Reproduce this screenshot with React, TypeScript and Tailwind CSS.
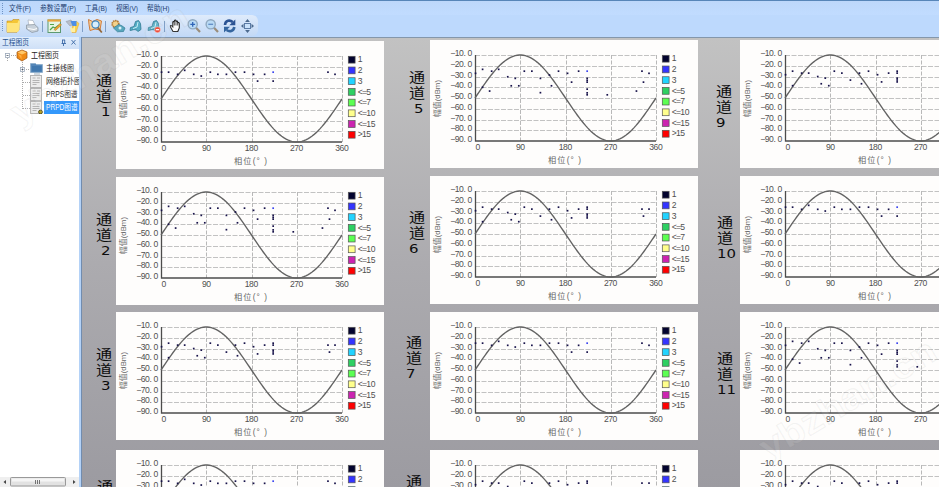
import { useMemo } from "react";

type Point = [phase: number, dbm: number, color?: string];

const BLUE = "#3c46f0";

const SPARSE: Point[] = [
  [1, -25], [15, -25], [33, -27], [47, -23.3], [65, -27], [80, -28.6],
  [98, -25], [113, -27], [130, -27], [148, -25], [166, -25], [184, -27],
  [192, -33.3], [206, -27], [223, -33.3], [223, -25, BLUE], [332, -25], [346, -27]
];

const DENSE: Point[] = [
  [1, -27], [15, -23.3], [15, -40], [29, -43.5], [33, -25], [47, -23.3],
  [65, -30.2], [72, -38.6], [80, -31.7], [87, -38.6], [98, -25], [113, -25],
  [130, -31.7], [130, -45], [148, -28.6], [152, -38.6], [166, -25], [184, -27],
  [192, -35.2], [206, -25], [223, -25, BLUE], [223, -31.7], [223, -33.5],
  [223, -35.2], [223, -41.7], [223, -45.2], [223, -47], [263, -47],
  [321, -43.5], [332, -25], [335, -35.2], [346, -27]
];

const MEDIUM: Point[] = [
  [1, -28.3], [15, -25], [15, -38.5], [33, -26.8], [47, -26.8], [65, -30],
  [72, -36.7], [80, -31.5], [87, -38.5], [98, -25], [113, -26.8], [130, -33.3],
  [148, -26.8], [152, -36.7], [166, -25], [184, -28.3], [192, -35], [206, -26.8],
  [223, -25], [223, -26.8], [223, -31.5], [223, -33.2], [223, -35],
  [332, -26.8], [335, -33.3], [346, -26.8]
];

// label = left edge and top of the channel name, num = x shift of the number
const COLUMNS = [
  {
    id: "left",
    width: 314,
    cardX: 34,
    channels: [
      { no: 1, top: 3, label: [14, 31], num: 5, points: SPARSE },
      { no: 2, top: 8, label: [14, 34], num: 5, points: DENSE },
      { no: 3, top: 7, label: [14, 34], num: 5, points: MEDIUM },
      { no: 4, top: 10, label: [15, 28], num: 5, points: SPARSE }
    ]
  },
  {
    id: "middle",
    width: 310,
    cardX: 34,
    channels: [
      { no: 5, top: 2, label: [13, 29], num: 5, points: DENSE },
      { no: 6, top: 8, label: [13, 33], num: 0, points: MEDIUM },
      { no: 7, top: 8, label: [10, 22], num: 0, points: SPARSE },
      { no: 8, top: 10, label: [10, 23], num: 0, points: MEDIUM }
    ]
  },
  {
    id: "right",
    width: 310,
    cardX: 34,
    channels: [
      { no: 9, top: 2, label: [10, 43], num: 0, points: MEDIUM },
      { no: 10, top: 8, label: [11, 38], num: 0, points: SPARSE },
      { no: 11, top: 8, label: [11, 38], num: 0, points: DENSE },
      { no: 12, top: 10, label: [11, 50], num: 0, points: MEDIUM }
    ]
  }
];

const LEGEND = [
  { label: "1", color: "#03032e" },
  { label: "2", color: "#3434ff" },
  { label: "3", color: "#22d3ff" },
  { label: "<=5", color: "#2ed062" },
  { label: "<=7", color: "#5cff52" },
  { label: "<=10", color: "#ffff8c" },
  { label: "<=15", color: "#cc24b0" },
  { label: ">15", color: "#ff0000" }
];

const MENUS = [
  { text: "文件(F)", width: 22 },
  { text: "参数设置(P)", width: 36 },
  { text: "工具(B)", width: 22 },
  { text: "视图(V)", width: 22 },
  { text: "帮助(H)", width: 22.5 }
];

const X0 = 45;
const Y0 = 15;
const W = 181;
const H = 86;
const CELL = 4.3;

const px = (phase: number) => X0 + (phase / 360) * W;
const py = (dbm: number) => Y0 + ((-10 - dbm) / 80) * H;

// every character sits in a cell of the same width
function CellText({ text, x, y }: { text: string; x: number; y: number }) {
  const xs = text.split("").map((c, i) => x + (i + (c === "." ? 0.3 : 0.5)) * CELL);
  return (
    <text x={xs.join(" ")} y={y} textAnchor="middle">
      {text}
    </text>
  );
}

function PrpdChart({ points }: { points: Point[] }) {
  const curve = useMemo(() => {
    const parts: string[] = [];
    for (let a = 0; a <= 360; a += 4) {
      parts.push(`${px(a).toFixed(2)},${py(-50 + 40 * Math.sin((a * Math.PI) / 180)).toFixed(2)}`);
    }
    return parts.join(" ");
  }, []);

  return (
    <svg
      width="268"
      height="128"
      viewBox="0 0 268 128"
      className="block shrink-0 bg-[#fefdfc] font-['Liberation_Sans','Noto_Sans_CJK_SC',sans-serif]"
    >
      {[-10, -20, -30, -40, -50, -60, -70, -80].map((v) => (
        <line key={v} x1={X0} x2={X0 + W} y1={Math.round(py(v)) + 0.5} y2={Math.round(py(v)) + 0.5} stroke="#c2c2c2" strokeDasharray="5 1.5" />
      ))}
      {[90, 180, 270, 360].map((v) => (
        <line key={v} x1={Math.round(px(v)) + 0.5} x2={Math.round(px(v)) + 0.5} y1={Y0} y2={Y0 + H} stroke="#b8b8b8" strokeDasharray="4 1.5" />
      ))}
      <path d={`M${X0 + 0.5} ${Y0}V${Y0 + H}H${X0 + W}`} fill="none" stroke="#4c4c4c" strokeWidth="1.3" />
      <polyline points={curve} fill="none" stroke="#636363" strokeWidth="1.35" />
      {points.map(([phase, dbm, color], i) => (
        <rect key={i} x={px(phase) - 0.8} y={py(dbm) - 0.8} width="1.7" height="1.7" fill={color ?? "#17124a"} />
      ))}
      <g fontSize="8.6" fill="#505050">
        {[10, 20, 30, 40, 50, 60, 70, 80, 90].map((v, i) => (
          <CellText key={v} text={`−${v}.0`} x={20.6} y={16.2 + i * 10.72} />
        ))}
        {[0, 90, 180, 270, 360].map((v, i) => (
          <CellText key={v} text={String(v)} x={[48, 90.5, 135.5, 180.7, 226][i] - (String(v).length * CELL) / 2} y={110.2} />
        ))}
        <g fill="#666">
          <text x="118" y="122.5" fontSize="8.2" textLength="33" lengthAdjust="spacing">
            相位(° )
          </text>
          <text x="-77" y="10" fontSize="7.8" transform="rotate(-90)" textLength="37" lengthAdjust="spacing">
            幅值(dBm)
          </text>
        </g>
        {LEGEND.map((item, i) => (
          <g key={item.label}>
            <rect x="232.3" y={15.3 + i * 10.72} width="6.8" height="6.8" fill={item.color} stroke="#555" strokeWidth="0.7" />
            <CellText text={item.label} x={242} y={21.4 + i * 10.72} />
          </g>
        ))}
      </g>
    </svg>
  );
}

function ChannelLabel({ no, pos, num }: { no: number; pos: number[]; num: number }) {
  return (
    <svg width="20" height="47" className="block overflow-visible" style={{ marginLeft: pos[0], marginTop: pos[1] }} fill="#0c0c0c">
      <text fontSize="14" fontWeight="400" transform="scale(1.15 1)" className="font-['Noto_Sans_CJK_SC',sans-serif]">
        <tspan x="0" y="13.4">通</tspan>
        <tspan x="0" y="29">道</tspan>
      </text>
      <text
        x={num}
        y="43.7"
        fontSize="12.5"
        textLength={String(no).length * 9.5}
        lengthAdjust="spacingAndGlyphs"
        className="font-['DejaVu_Sans',sans-serif]"
      >
        {no}
      </text>
    </svg>
  );
}

function Grip() {
  return <div className="h-[11px] w-px shrink-0 border-l border-dotted border-[#6f93c4]" />;
}

function Toolbar() {
  return (
    <div className="flex h-[21px] w-[258px] shrink-0 items-center rounded-r-md bg-linear-to-b from-[#dfebfb] to-[#c3d9f6] pl-0.5">
      <Grip />
      <svg width="253" height="21" viewBox="3 -1 253 21" className="shrink-0" fill="none">
        {/* open */}
        <path d="M7 5h5l1-1.5h6V14l-2 2.2H7z" fill="#f4c535" stroke="#c28f20" strokeWidth=".6" />
        <path d="M7 7h10.500l1-3 1.500 1-1 9.500-1.500 1.500H7z" fill="#ffe47a" />
        {/* print */}
        <path d="M28 4l5 .5 2 4.500-6 1z" fill="#fff" stroke="#9aa4b2" strokeWidth=".6" />
        <path d="M26.500 9l8-.5 3.500 3v3.500l-6 1.500-5.500-3.500z" fill="#c8d1da" stroke="#87929e" strokeWidth=".7" />
        <path d="M28 12.500l6 1 3-1" stroke="#fff" />
        <path d="M42.500 5v11" stroke="#7f9fc8" />
        {/* edit diagram */}
        <rect x="48" y="4" width="12.500" height="12.500" fill="#e7f4e3" stroke="#5c9a72" />
        <path d="M47.500 4.500h13.500" stroke="#e8a33c" strokeWidth="2.200" />
        <path d="M50 14l3-3 2 1 4-3M50 8.500h4" stroke="#51a34a" strokeWidth="1.200" />
        <path d="M54 13.500l6-6 1.500 1.500-6 5.500z" fill="#f3a730" stroke="#a36a20" strokeWidth=".5" />
        {/* wizard */}
        <path d="M66 5.500l5-1.500 3 4-4 2z" fill="#b7bec9" stroke="#8b92a0" strokeWidth=".5" />
        <path d="M72.500 9l3.500-4 3 2.500-3 9h-4z" fill="#fbd34e" stroke="#e6a42c" strokeWidth=".5" />
        <path d="M70.500 5h6v5h-4z" fill="#4d8ee6" />
        <path d="M70 11l3 1.500 2-3v6.500h-4z" fill="#fff0a2" />
        <path d="M82.500 5v11" stroke="#7f9fc8" />
        {/* map search */}
        <path d="M88.500 3.500l4 2 4.500-2 4.500 1.500-1.500 9-5-1-5 1.500-1-6z" fill="#f8cf96" stroke="#cf7c3c" />
        <circle cx="95.500" cy="8.500" r="3.600" fill="#d9effc" stroke="#3c86c3" strokeWidth="1.200" />
        <path d="M97.800 11.500l4 5" stroke="#94683a" strokeWidth="1.800" />
        <path d="M105.500 5v11" stroke="#7f9fc8" />
        {/* gears */}
        <circle cx="115.500" cy="8" r="3.300" fill="#f3d28b" stroke="#b37a32" strokeWidth="1.700" strokeDasharray="1.500 .6" />
        <path d="M113.500 12l5-3.500 3 1 3.500 2.500-1.500 3.500-6 .3z" fill="#58a7bd" stroke="#2f7b94" strokeWidth=".7" />
        <circle cx="120" cy="12" r="1.500" fill="#d8f2f7" />
        {/* connect */}
        <path d="M130 14.500l.5-3 3.500-1 1.500-5 3-1 2 3 .5 6-3 2c-2-2-3-2.500-7.500-1z" fill="#55adc5" stroke="#2e7791" strokeWidth=".8" />
        <path d="M133 12.500l4-1.500 1-5" stroke="#c6eef5" />
        {/* disconnect */}
        <path d="M148 14.500l.5-3 3.500-1 1.500-5 3-1 2 3 .5 6-3 2c-2-2-3-2.500-7.500-1z" fill="#55adc5" stroke="#2e7791" strokeWidth=".8" />
        <path d="M151 12.500l4-1.500 1-5" stroke="#c6eef5" />
        <circle cx="157.500" cy="13.700" r="3" fill="#ef4b38" stroke="#fff" strokeWidth=".4" />
        <path d="M155.800 13.700h3.400" stroke="#fff" strokeWidth="1.200" />
        <path d="M164.500 5v11" stroke="#7f9fc8" />
        {/* pan hand */}
        <path d="M173 15.500l-2.500-4.500c-.5-1.500.5-2 1.300-1l1 1V6.500c0-1.200 1.400-1.200 1.500 0V5c0-1.300 1.600-1.300 1.700 0v1c0-1.200 1.600-1.100 1.700 0v1.200c.2-1 1.600-.9 1.600.2V12l-1.500 3.500z" fill="#fff" stroke="#222" strokeWidth="1.100" />
        <path d="M174.300 6.500v3M176 6v3.500M177.700 7v2.500" stroke="#222" strokeWidth=".8" />
        {/* zoom in / out */}
        <path d="M195.800 11.500l4.200 4.500" stroke="#9a8d7b" strokeWidth="2.200" />
        <circle cx="192.700" cy="8.300" r="4.600" fill="#b9daf5" stroke="#8fa9c0" strokeWidth="1.400" />
        <path d="M190.300 8.300h4.800M192.700 5.900v4.800" stroke="#2f65b8" strokeWidth="1.300" />
        <path d="M213.800 11.500l4.200 4.500" stroke="#9a8d7b" strokeWidth="2.200" />
        <circle cx="210.700" cy="8.300" r="4.600" fill="#b9daf5" stroke="#8fa9c0" strokeWidth="1.400" />
        <path d="M208.300 8.300h4.800" stroke="#5f8cc4" strokeWidth="1.300" />
        {/* refresh */}
        <path d="M225 9c.3-5 5-5.300 7.700-3" stroke="#2b5393" strokeWidth="2.600" />
        <path d="M235.300 3.500v5.700h-6z" fill="#2b5393" />
        <path d="M234.300 11c-.5 4.500-5 5-7.700 3" stroke="#34659f" strokeWidth="2.600" />
        <path d="M224 16.500v-5.700h6z" fill="#34659f" />
        {/* fit to window */}
        <rect x="244.500" y="7.500" width="6" height="5" fill="#c9e1fa" stroke="#5b7ba5" />
        <path d="M247.500 3l2.400 3h-4.800zM247.500 17l2.400-3h-4.800zM241 10l2.500-2.200v4.400zM254 10l-2.500-2.200v4.400z" fill="#4c6a8e" />
      </svg>
    </div>
  );
}

function PageIcon({ active }: { active?: boolean }) {
  return (
    <svg width="13" height="13" viewBox="0 0 13 13" className="shrink-0" fill="none">
      <rect x=".5" y=".5" width="11" height="12" fill="#ececec" stroke="#b4b4b4" />
      <path d="M2.500 3h3M7 3h3M2.500 5.500h7M2.500 7.500h7M2.500 9.500h4" stroke="#b4b4b4" />
      {active && <circle cx="10.500" cy="11" r="1.900" fill="#b8a51f" stroke="#3d3813" strokeWidth=".8" />}
    </svg>
  );
}

function TreeText({ text, width, active }: { text: string; width: number; active?: boolean }) {
  return (
    <div className={active ? "h-[13px] bg-[#3498fb] pl-[1.5px]" : "h-[13px] pl-[1.5px]"}>
      <svg width={width} height="13" className="block overflow-visible">
        <text x="0" y="9.4" fontSize="8.3" fill={active ? "#fff" : "#222"} textLength={width} lengthAdjust="spacingAndGlyphs">
          {text}
        </text>
      </svg>
    </div>
  );
}

function Sidebar() {
  return (
    <aside className="flex w-[79px] shrink-0 flex-col overflow-hidden bg-white">
      <div className="flex h-[12px] shrink-0 items-center bg-linear-to-b from-[#e1edfc] to-[#cfe0f7] pl-0.5">
        <svg width="77" height="12" fill="none">
          <text x="0" y="8.2" fontSize="8" fill="#24508f" textLength="27" lengthAdjust="spacingAndGlyphs">工程图页</text>
          <path d="M60 3h3M60.500 3v3.500M62.700 3v3.500M59.500 6.500h4.500M61.500 6.500v2.500M69.500 3l4 4.500M73.500 3l-4 4.500" stroke="#3a68a5" strokeWidth=".9" />
        </svg>
      </div>
      <div className="flex h-[13px] shrink-0 items-center pl-[5px]">
        <svg width="24" height="13" fill="none" className="shrink-0">
          <path d="M6 6.500h5M2.500 9v4" stroke="#aaa" strokeDasharray="1 1" />
          <rect x=".5" y="4.500" width="4" height="4" fill="#fff" stroke="#9ba7b8" strokeWidth=".8" />
          <path d="M1.500 6.500h2" stroke="#345" strokeWidth=".7" />
          <path d="M17 1l5 2v6l-5 3-5-3V3z" fill="#f08b16" stroke="#9b5312" strokeWidth=".7" />
          <path d="M17 1.500l4.500 2-4.500 2-4.500-2z" fill="#ffc768" />
          <path d="M13 5l3.500 1.500v4z" fill="#ffad3e" />
        </svg>
        <TreeText text="工程图页" width={28} />
      </div>
      <div className="flex h-[53px] shrink-0">
        <svg width="30" height="53" fill="none" className="shrink-0">
          <path d="M22.500 0v47M26 7.500h4M23 20.500h7M23 33.500h7M23 46.500h7" stroke="#aaa" strokeDasharray="1 1" />
          <rect x="20.500" y="5.500" width="4" height="4" fill="#fff" stroke="#9ba7b8" strokeWidth=".8" />
          <path d="M21.500 7.500h2M22.500 6.500v2" stroke="#345" strokeWidth=".7" />
        </svg>
        <div className="flex w-[14px] shrink-0 flex-col">
          <svg width="13" height="13" fill="none">
            <path d="M.5 1.500h5l1 1h6v8H.5z" fill="#5486b8" stroke="#87a9c9" strokeWidth=".7" />
            <path d="M2 4h9.500v5.500H2z" fill="#4178ae" />
            <path d="M4 12h6" stroke="#9dafbf" />
          </svg>
          <PageIcon />
          <PageIcon />
          <PageIcon active />
        </div>
        <div className="flex w-[35px] shrink-0 flex-col overflow-hidden">
          <TreeText text="主接线图" width={28} />
          <TreeText text="网络拓扑图" width={35} />
          <TreeText text="PRPS图谱" width={31.5} />
          <TreeText text="PRPD图谱" width={31.5} active />
        </div>
      </div>
      <div className="grow" />
      <div className="flex h-[10px] shrink-0 items-center bg-[#efefef]">
        <svg width="79" height="10" fill="none">
          <path d="M6 3v4L3.500 5zM73 3v4l2.500-2z" fill="#444" />
          <rect x="10.500" y=".5" width="55" height="8.500" rx="1" fill="#e2e2e2" stroke="#999" />
          <path d="M12 1.500h52v3H12z" fill="#f5f5f5" />
          <path d="M35.500 3v4M37.500 3v4M39.500 3v4" stroke="#555" strokeWidth=".8" />
        </svg>
      </div>
    </aside>
  );
}

// faint site mark laid over the window
function Watermark({ className }: { className: string }) {
  return (
    <svg className={`pointer-events-none absolute overflow-visible ${className}`} width="180" height="130">
      <text
        x="0"
        y="124"
        fontSize="36"
        fontWeight="700"
        fill="#ffffff"
        fillOpacity=".1"
        stroke="#888"
        strokeOpacity=".09"
        strokeWidth="1.2"
        transform="rotate(-31 0 124)"
        textLength="200"
        lengthAdjust="spacingAndGlyphs"
      >
        ybzhan.cn
      </text>
    </svg>
  );
}

export default function App() {
  return (
    <div className="relative flex h-[487px] w-[939px] flex-col overflow-hidden bg-[#bdd9fd] font-['Liberation_Sans','Noto_Sans_CJK_SC',sans-serif]">
      <div className="h-px shrink-0 bg-[#5785b8]" />
      <nav className="flex h-[14px] shrink-0 items-center bg-linear-to-b from-[#bdd7fa] to-[#c1dcff] pl-0.5">
        <Grip />
        <div className="flex items-center gap-[9px] pl-1.5">
          {MENUS.map((menu) => (
            <svg key={menu.text} width={menu.width} height="14" className="block overflow-visible">
              <text x="0" y="9.8" fontSize="7.5" fill="#1d3d70" textLength={menu.width} lengthAdjust="spacingAndGlyphs">
                {menu.text}
              </text>
            </svg>
          ))}
        </div>
      </nav>
      <Toolbar />
      <div className="flex min-h-0 grow pt-px">
        <Sidebar />
        <div className="w-[3px] shrink-0 border-r border-[#718caf] bg-[#b4d2f7]" />
        <main className="flex min-w-0 grow flex-col overflow-hidden border-t border-[#8497ab] bg-linear-to-b from-[#c2c2c2] via-[#acabaf] to-[#9c9ba1]">
          <div className="flex">
            {COLUMNS.map((col) => (
              <div key={col.id} className="shrink-0" style={{ width: col.width }}>
                {col.channels.map((ch) => (
                  <div key={ch.no} className="flex h-[128px]" style={{ marginTop: ch.top }}>
                    <div className="shrink-0" style={{ width: col.cardX }}>
                      <ChannelLabel no={ch.no} pos={ch.label} num={ch.num} />
                    </div>
                    <PrpdChart points={ch.points} />
                  </div>
                ))}
              </div>
            ))}
          </div>
        </main>
      </div>
      <Watermark className="left-[20px] top-[2px]" />
      <Watermark className="left-[768px] top-[337px]" />
    </div>
  );
}
